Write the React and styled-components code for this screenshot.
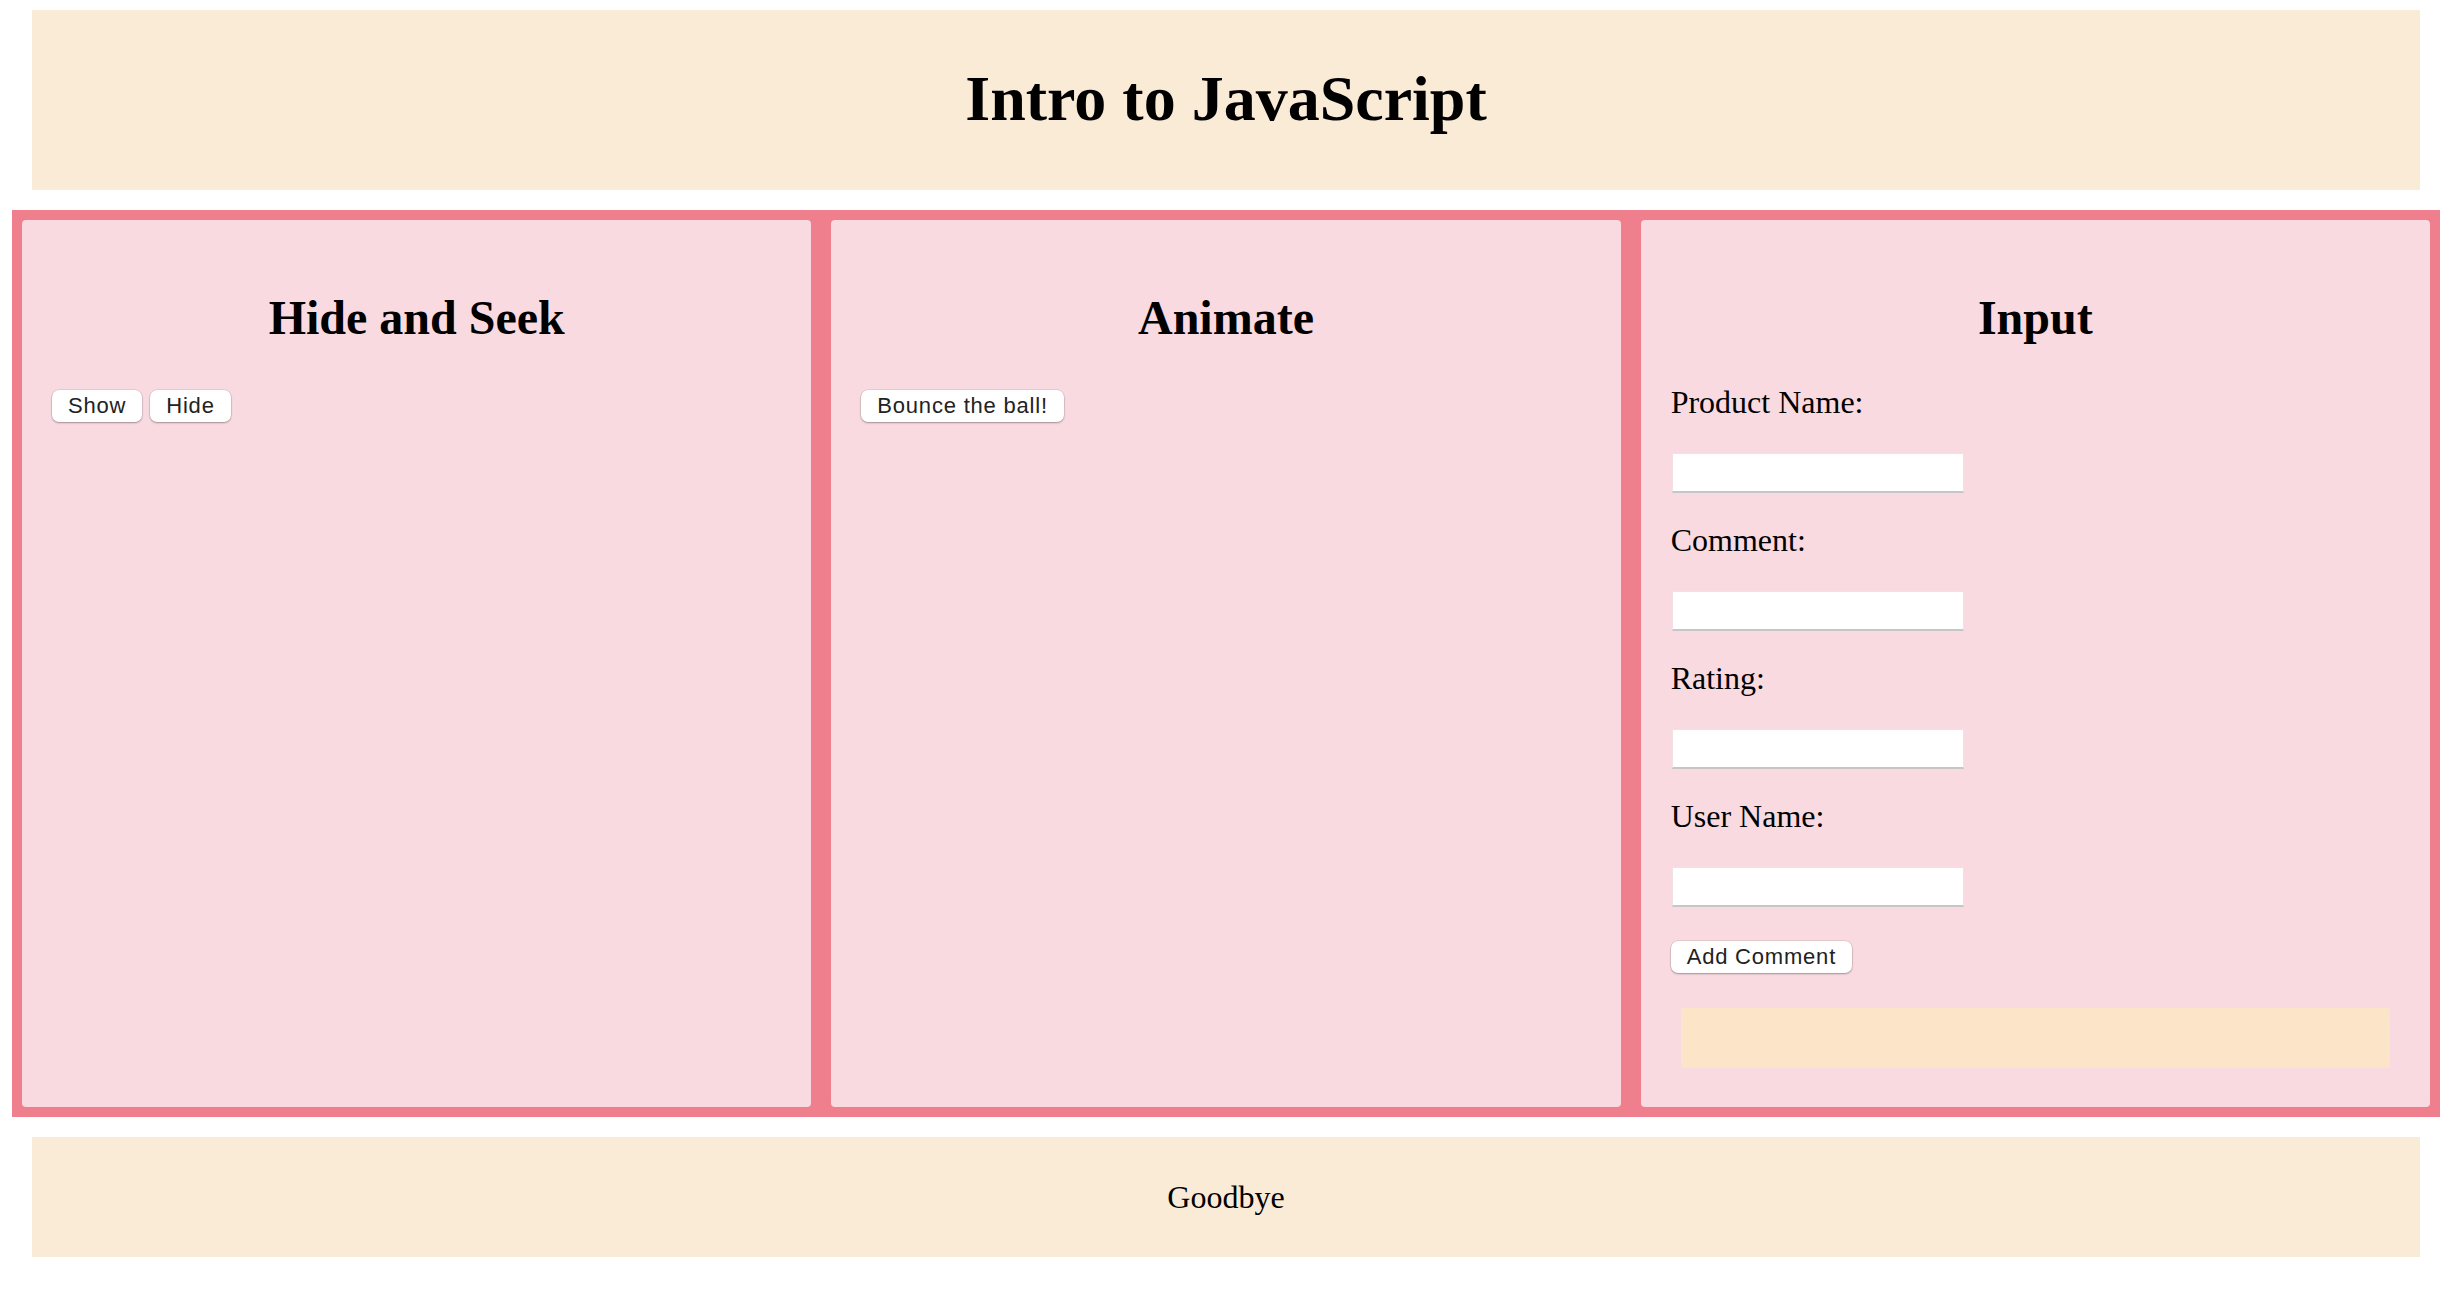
import React from 'react';
import styled, { createGlobalStyle } from 'styled-components';

const GlobalStyle = createGlobalStyle`
  html, body {
    margin: 0;
    padding: 0;
    background: #ffffff;
  }
  body {
    font-family: 'Liberation Serif', 'Times New Roman', serif;
    color: #000;
  }
`;

const fields = ['Product Name:', 'Comment:', 'Rating:', 'User Name:'];

const App = () => {
  return (
    <Page>
      <GlobalStyle />
      <Header>
        <Title>Intro to JavaScript</Title>
      </Header>

      <Panels>
        <Card>
          <CardTitle>Hide and Seek</CardTitle>
          <ButtonRow>
            <Button>Show</Button>
            <Button>Hide</Button>
          </ButtonRow>
        </Card>

        <Card>
          <CardTitle>Animate</CardTitle>
          <ButtonRow>
            <Button>Bounce the ball!</Button>
          </ButtonRow>
        </Card>

        <Card>
          <CardTitle $tight>Input</CardTitle>
          <FieldList>
            {fields.map((label) => (
              <Field key={label}>
                <Label>{label}</Label>
                <TextInput type="text" />
              </Field>
            ))}
          </FieldList>
          <Button>Add Comment</Button>
          <CommentBox />
        </Card>
      </Panels>

      <Footer>
        <FooterText>Goodbye</FooterText>
      </Footer>
    </Page>
  );
};

export default App;

const Page = styled.div`
  padding: 10px 0 47px;
  display: flex;
  flex-direction: column;
  gap: 20px;
`;

const Header = styled.header`
  margin: 0 36px 0 32px;
  height: 180px;
  background: #faebd7;
  display: flex;
  align-items: center;
  justify-content: center;
  padding-bottom: 3px;
  box-sizing: border-box;
`;

const Title = styled.h1`
  margin: 0;
  font-size: 64px;
  font-weight: 700;
`;

const Panels = styled.main`
  margin: 0 16px 0 12px;
  border: 10px solid #f07f8e;
  background: #f07f8e;
  display: flex;
  gap: 20px;
`;

const Card = styled.section`
  flex: 1;
  min-width: 0;
  background: #f8dae0;
  border-radius: 4px;
  padding: 30px;
`;

const CardTitle = styled.h2`
  margin: 40px 0 ${({ $tight }) => ($tight ? '40px' : '45px')};
  font-size: 48px;
  font-weight: 700;
  text-align: center;
`;

const ButtonRow = styled.div`
  display: flex;
  gap: 8px;
`;

const Button = styled.button`
  height: 32px;
  padding: 0 16px;
  border: none;
  border-radius: 7px;
  background: #ffffff;
  color: #222;
  font-family: 'Liberation Sans', Arial, sans-serif;
  font-size: 22px;
  letter-spacing: 0.8px;
  box-shadow: 0 1px 2px rgba(0, 0, 0, 0.3), 0 0 0 0.5px rgba(0, 0, 0, 0.12);
  cursor: pointer;
`;

const FieldList = styled.div`
  display: flex;
  flex-direction: column;
  gap: 30px;
  margin-bottom: 34px;
`;

const Field = styled.div`
  display: flex;
  flex-direction: column;
  align-items: flex-start;
`;

const Label = styled.label`
  display: block;
  font-size: 32px;
  line-height: 35px;
  margin-bottom: 33px;
`;

const TextInput = styled.input`
  box-sizing: border-box;
  width: 292px;
  height: 40px;
  margin: 0 0 0 1px;
  padding: 0 6px;
  background: #ffffff;
  border: 1px solid rgba(220, 170, 180, 0.35);
  border-bottom: 2px solid #c6c6c6;
  font-size: 26px;
  outline: none;
`;

const CommentBox = styled.div`
  height: 60px;
  margin: 35px 10px 9px;
  background: #fce4c9;
  border-radius: 2px;
`;

const Footer = styled.footer`
  margin: 0 36px 0 32px;
  height: 120px;
  background: #faebd7;
  display: flex;
  align-items: center;
  justify-content: center;
`;

const FooterText = styled.p`
  margin: 0;
  font-size: 32px;
`;
